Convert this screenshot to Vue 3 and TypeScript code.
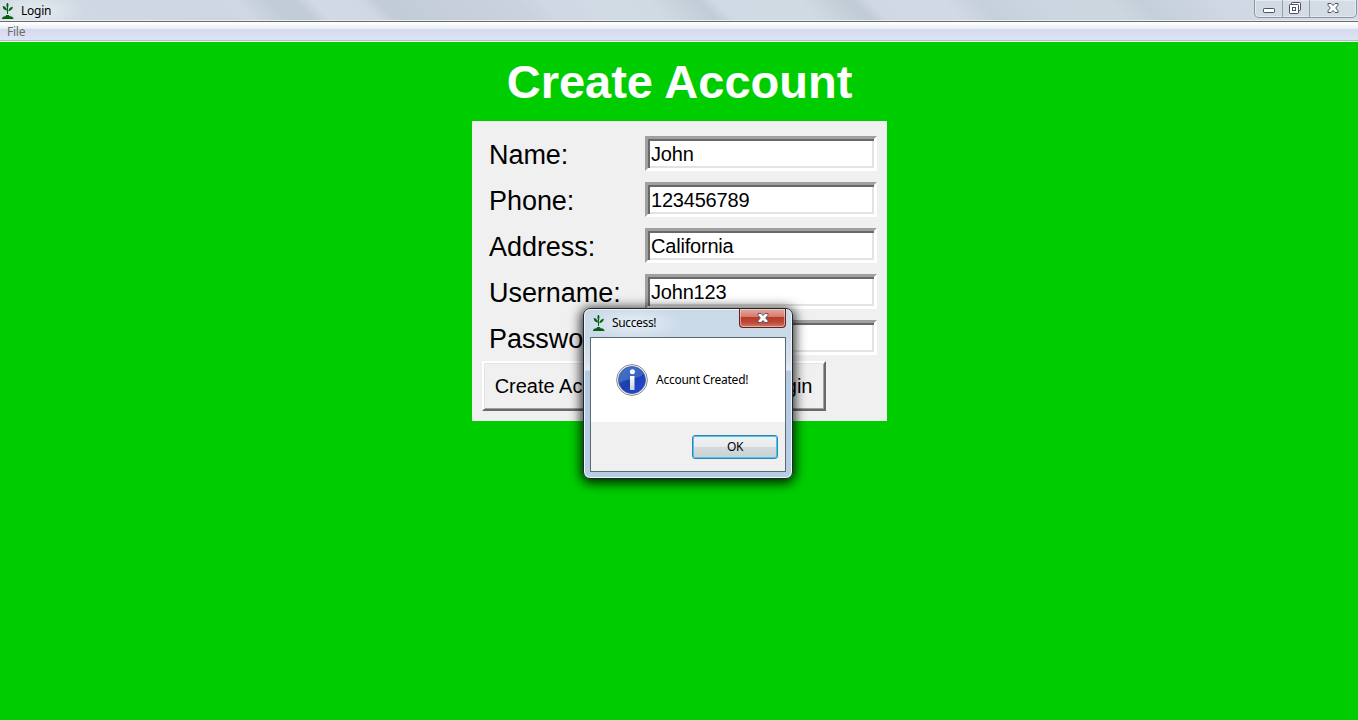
<script setup lang="ts">
import { ref } from 'vue'

interface Field {
  label: string
  value: string
}

const fields = ref<Field[]>([
  { label: 'Name:', value: 'John' },
  { label: 'Phone:', value: '123456789' },
  { label: 'Address:', value: 'California' },
  { label: 'Username:', value: 'John123' },
  { label: 'Password:', value: '' },
])
</script>

<template>
  <div class="window">
    <header class="titlebar">
      <svg class="plant" width="12" height="16" viewBox="0 0 12 16">
        <path d="M5 0h1l.5 2-.5 3.500H5L4.300 2zM.600 3l2.200.6L4.800 6v1.500L2.800 7 1.200 5.400zM11 3.800L10.200 6 8 7.800l-1.800.4L7 6l1.800-1.700z" />
        <path d="M4.800 5h1.200v6H5zM0 16v-1l1.600-1.400 1.800-.4.900-1.200h2.400l1 1.200 2 .4L11.400 15v1z" />
      </svg>
      <span class="caption">Login</span>
      <div class="controls">
        <span class="control minimize">
          <svg width="12" height="6" viewBox="0 0 12 6"><rect x=".5" y=".5" width="11" height="4" rx=".7" fill="#fff" stroke="#4d5266" /></svg>
        </span>
        <span class="control restore">
          <svg width="12" height="12" viewBox="0 0 12 12" stroke="#4d5266" fill="#fff">
            <rect x="2.500" y=".5" width="9" height="8" rx=".7" />
            <rect x=".5" y="2.500" width="9" height="9" rx=".7" />
            <rect x="3.500" y="5.500" width="3" height="3" />
          </svg>
        </span>
        <span class="control shut">
          <svg width="12" height="10" viewBox="0 0 12 10"><path d="M1 .5h3L6 2.500 8 .5h3v1.700L8.700 5 11 7.800v1.700H8L6 7.500l-2 2H1V7.800L3.300 5 1 2.200z" fill="#fff" stroke="#4d5266" /></svg>
        </span>
      </div>
    </header>
    <nav class="menubar"><span>File</span></nav>
    <main class="content">
      <h1>Create Account</h1>
      <section class="panel">
        <label v-for="field in fields" :key="field.label" class="row">
          <span class="label">{{ field.label }}</span>
          <input v-model="field.value" type="text" />
        </label>
        <div class="actions">
          <button class="tk">Create Account</button>
          <button class="tk login">Login</button>
        </div>
      </section>
    </main>

    <div class="dialog">
      <div class="dialog-title">
        <svg class="plant" width="12" height="16" viewBox="0 0 12 16">
          <path d="M5 0h1l.5 2-.5 3.500H5L4.300 2zM.600 3l2.200.6L4.800 6v1.500L2.800 7 1.200 5.400zM11 3.800L10.200 6 8 7.800l-1.800.4L7 6l1.800-1.700z" />
          <path d="M4.800 5h1.200v6H5zM0 16v-1l1.600-1.400 1.800-.4.900-1.200h2.400l1 1.200 2 .4L11.400 15v1z" />
        </svg>
        <span class="caption">Success!</span>
        <span class="close">
          <svg width="12" height="10" viewBox="0 0 12 10"><path d="M1 .5h3L6 2.500 8 .5h3v1.700L8.700 5 11 7.800v1.700H8L6 7.500l-2 2H1V7.800L3.300 5 1 2.200z" fill="#fff" stroke="#5b5565" /></svg>
        </span>
      </div>
      <div class="client">
        <div class="message">
          <svg width="32" height="32" viewBox="0 0 32 32">
            <defs>
              <linearGradient id="ball" x1="0" y1="0" x2="1" y2="1">
                <stop offset="0" stop-color="#2c5cb4" />
                <stop offset=".5" stop-color="#1b3fae" />
                <stop offset="1" stop-color="#2549e0" />
              </linearGradient>
              <linearGradient id="stem" x1="0" y1="0" x2="0" y2="1">
                <stop offset="0" stop-color="#fff" />
                <stop offset="1" stop-color="#c9cede" />
              </linearGradient>
            </defs>
            <circle cx="16" cy="16" r="15.400" fill="#f4f4f4" stroke="#858a90" />
            <circle cx="16" cy="16" r="13.500" fill="url(#ball)" stroke="#34549c" stroke-width=".8" />
            <path d="M3 16a13 13 0 0 1 24.600-6C22 15.500 13 13.500 3 19z" fill="#6f9ae0" opacity=".4" />
            <circle cx="16.400" cy="7.800" r="2.500" fill="#fff" />
            <path d="M14 12h4.500v14H14z" fill="url(#stem)" />
          </svg>
          <span>Account Created!</span>
        </div>
        <div class="footer"><button class="ok">OK</button></div>
      </div>
    </div>
  </div>
</template>

<style>
html,
body {
  margin: 0;
  overflow: hidden;
}
</style>

<style scoped>
* {
  box-sizing: border-box;
}
.window {
  position: relative;
  width: 1358px;
  height: 720px;
  display: flex;
  flex-direction: column;
  overflow: hidden;
  background: #00cd00;
  font-family: "Liberation Sans", Arial, sans-serif;
  color: #000;
}
.titlebar {
  height: 22px;
  flex: none;
  display: flex;
  padding-left: 2px;
  border-bottom: 1px solid #686b70;
  box-shadow: inset 0 -1px #e8edf3;
  background:
    radial-gradient(ellipse 50px 20px at 36px 11px, #e6ebf1, transparent),
    linear-gradient(45deg, #cfd9e3 0, #ced7e1 165px, #d0d9e3 178px, #c2ccd6 205px, #c2ccd6 223px, #d1d9e4 234px, #d0d8e3 268px, #c2ccd6 282px, #cad3dd 378px, #d0d8e3 400px, #d1d8e4 418px, #d1dbe4 430px, #d0dae3 472px, #c2ccd6 508px, #d0dae4 520px, #cfdae3 580px, #c2ccd6 612px, #c2ccd6 618px, #d0d8e3 628px, #d0d9e4 682px, #c6d0da 706px, #cbd6e0 750px, #ccd7e0 796px, #c5cfd9 822px, #cfd8e2 870px, #d5dde6 100%);
}
.plant {
  flex: none;
  fill: #075f12;
}
.titlebar .plant {
  margin-top: 3px;
}
.caption {
  font: 12px/16px "Noto Sans", "Open Sans", sans-serif;
}
.titlebar .caption {
  margin: 3px 0 0 7px;
  letter-spacing: -0.25px;
}
.controls {
  height: 18px;
  width: 103px;
  margin: 0 1px 0 auto;
  display: flex;
  border: 1px solid #8c95a1;
  border-top: 0;
  border-radius: 0 0 5px 5px;
  box-shadow: inset 0 0 0 1px #e4eaf0;
}
.control {
  display: flex;
  justify-content: center;
}
.control + .control {
  border-left: 1px solid #97a0ab;
}
.minimize {
  width: 27px;
  padding: 8px 0 0 1px;
}
.restore {
  width: 27px;
  padding-top: 2px;
  padding-right: 2px;
}
.shut {
  width: 47px;
  padding-top: 3px;
}
.menubar {
  height: 20px;
  flex: none;
  padding-left: 7px;
  background: linear-gradient(#fff 0, #f8f9fc 3px, #e8ebf4 7px, #d4daed 7px, #dfe4f5 18px, #b6bccc 18px, #b6bccc 19px, #f0f0f0 19px);
  color: #6d6d6d;
  font: 12px/19px "Noto Sans", "Open Sans", sans-serif;
  letter-spacing: -0.25px;
}
.content {
  display: flex;
  flex-direction: column;
  align-items: center;
}
h1 {
  margin: 0;
  height: 79px;
  padding-left: 1px;
  font-size: 47px;
  line-height: 79px;
  font-weight: 700;
  color: #fff;
  white-space: nowrap;
}
.panel {
  width: 415px;
  height: 300px;
  margin-left: 1px;
  padding: 15px 10px 0;
  background: #f0f0f0;
}
.row {
  display: flex;
  justify-content: space-between;
  height: 35px;
  margin-bottom: 11px;
}
.label {
  padding-left: 7px;
  font-size: 27px;
  line-height: 39px;
  letter-spacing: -0.05px;
  white-space: nowrap;
}
input {
  width: 232px;
  height: 35px;
  border: 3px solid;
  border-color: #a0a0a0 #fff #fff #a0a0a0;
  padding: 2px 2px 0 3px;
  outline: 0;
  background:
    linear-gradient(#696969, #696969) 0 0 / 100% 2px no-repeat,
    linear-gradient(#696969, #696969) 0 0 / 2px 100% no-repeat,
    linear-gradient(#e3e3e3, #e3e3e3) 0 100% / 100% 2px no-repeat,
    linear-gradient(#e3e3e3, #e3e3e3) 100% 0 / 2px 100% no-repeat,
    #fff;
  font: 20px/27px "Liberation Sans", Arial, sans-serif;
  letter-spacing: -0.2px;
  color: #000;
}
.actions {
  display: flex;
  justify-content: space-between;
  width: 344px;
  margin-top: -5px;
}
.tk {
  height: 50px;
  width: 162px;
  padding: 0;
  border: 2px solid;
  border-color: #fff #696969 #696969 #fff;
  background: #f0f0f0;
  box-shadow: inset 1px 1px #e3e3e3, inset -1px -1px #a0a0a0;
  font: 20px/44px "Liberation Sans", Arial, sans-serif;
  color: #000;
  white-space: nowrap;
}
.login {
  width: 76px;
}
.dialog {
  position: absolute;
  left: 583px;
  top: 308px;
  width: 210px;
  height: 171px;
  padding: 0 6px;
  border: 1px solid #23282e;
  border-radius: 7px;
  background: linear-gradient(#c9d9e8 0, #cbdae8 25px, #d4e1ee 50px, #e2ebf4 61px, #b5cbe3 62px, #b7cce5 100%);
  box-shadow: inset 0 0 0 1px #edf4fa, 0 2px 12px 2px rgba(0, 0, 0, 0.85);
}
.dialog-title {
  height: 28px;
  display: flex;
  padding-left: 3px;
  background: radial-gradient(ellipse 50px 16px at 44px 14px, #e8eff6, transparent);
}
.dialog .plant {
  margin-top: 6px;
}
.dialog .caption {
  margin: 6px 0 0 7px;
  letter-spacing: -0.35px;
}
.close {
  width: 47px;
  height: 19px;
  margin-left: auto;
  padding: 4px 0 0 1px;
  display: flex;
  justify-content: center;
  border: 1px solid #5c2428;
  border-top: 0;
  border-radius: 0 0 4px 4px;
  background: linear-gradient(#e4a99f 0, #d5796b 8px, #b93a28 8px, #bc4634 13px, #d5826c 19px);
  box-shadow: inset 0 0 0 1px rgba(255, 220, 210, 0.55);
}
.client {
  height: 135px;
  border: 1px solid #5d6874;
  background: #f0f0f0;
}
.message {
  height: 84px;
  padding: 26px 0 0 25px;
  display: flex;
  gap: 8px;
  background: #fff;
  font: 12px/32px "Noto Sans", "Open Sans", sans-serif;
  letter-spacing: -0.25px;
  white-space: nowrap;
}
.footer {
  display: flex;
  justify-content: flex-end;
  padding: 13px 7px 0 0;
}
.ok {
  width: 86px;
  height: 24px;
  padding: 0;
  border: 1px solid #3c7fb1;
  border-radius: 3px;
  background: linear-gradient(#f2f2f2 0, #e8ebec 11px, #d5dadc 11px, #c9d2d4 100%);
  box-shadow: inset 0 0 0 1px #48c8f0;
  font: 12px/20px "Noto Sans", "Open Sans", sans-serif;
  letter-spacing: -0.3px;
  color: #000;
}
</style>
